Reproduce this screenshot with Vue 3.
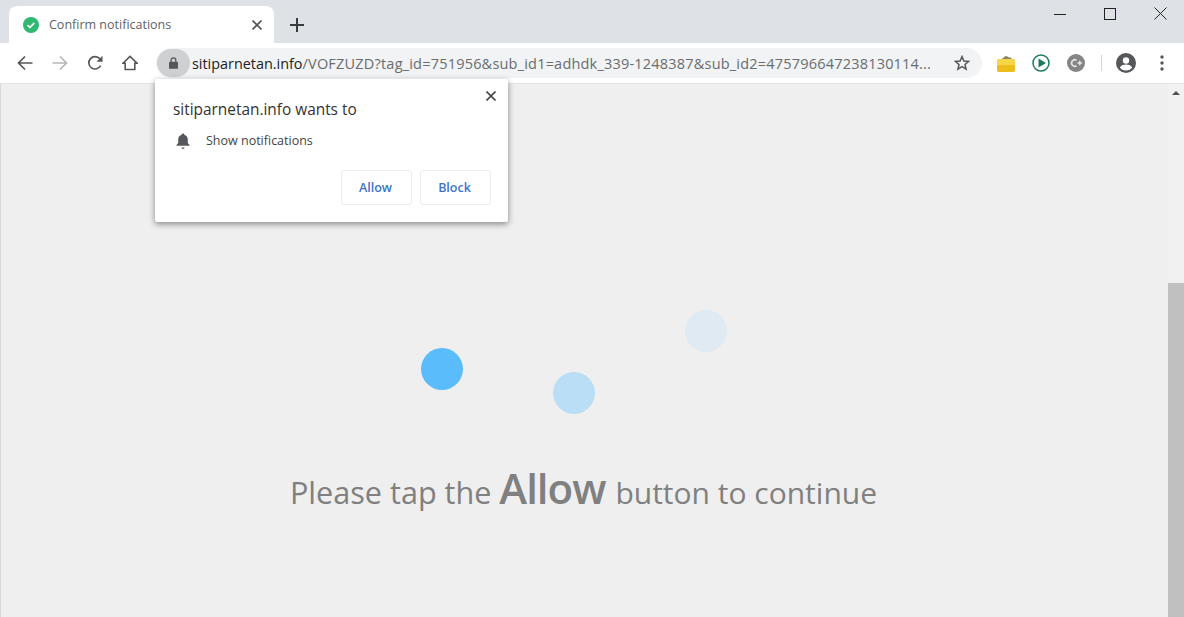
<template>
  <div class="browser">
    <div class="tabstrip">
      <div class="tab">
        <svg class="favicon" width="16" height="16" viewBox="0 0 16 16">
          <circle cx="8" cy="8" r="8" fill="#2eb872" />
          <path d="M4.6 8.2l2.3 2.3 4.4-4.6" fill="none" stroke="#fff" stroke-width="1.7" />
        </svg>
        <span class="tab-title">Confirm notifications</span>
        <svg class="tab-close" width="10" height="10" viewBox="0 0 10 10">
          <path d="M.5.5l9 9M9.500.5l-9 9" stroke="#555" stroke-width="1.6" />
        </svg>
      </div>
      <svg class="new-tab" width="14" height="14" viewBox="0 0 14 14">
        <path d="M7 0v14M0 7h14" stroke="#3a3b3e" stroke-width="2" />
      </svg>
      <div class="window-controls">
        <svg width="12" height="12" viewBox="0 0 12 12"><path d="M0 6.500h12" stroke="#222" stroke-width="1" /></svg>
        <svg width="12" height="12" viewBox="0 0 12 12"><rect x=".5" y=".5" width="11" height="11" fill="none" stroke="#222" /></svg>
        <svg width="13" height="13" viewBox="0 0 13 13"><path d="M.5.5l12 12M12.500.5l-12 12" stroke="#222" stroke-width="1" /></svg>
      </div>
    </div>

    <div class="toolbar">
      <div class="nav">
        <svg width="16" height="16" viewBox="0 0 16 16"><path d="M15.500 8H1.500M8 1.500L1.500 8 8 14.500" fill="none" stroke="#55575a" stroke-width="1.700" /></svg>
        <svg width="16" height="16" viewBox="0 0 16 16"><path d="M.5 8h14M8 1.500L14.500 8 8 14.500" fill="none" stroke="#b4b6b9" stroke-width="1.700" /></svg>
        <svg width="16" height="16" viewBox="0 0 16 16"><path d="M13.600 10.500A6.200 6.200 0 1 1 12.800 3.800L14.800 5.800" fill="none" stroke="#55575a" stroke-width="1.700" /><path d="M15.500 .8v6h-6z" fill="#55575a" /></svg>
        <svg width="16" height="16" viewBox="0 0 16 16"><path d="M1 8.200L8 1.400l7 6.800h-2.200v6.300H3.200V8.200z" fill="none" stroke="#55575a" stroke-width="1.600" /></svg>
      </div>
      <div class="omnibox">
        <div class="lock-pill">
          <svg width="9" height="12" viewBox="0 0 10 13">
            <rect x="0" y="5" width="10" height="8" rx="1" fill="#55575a" />
            <path d="M2.400 5.500V3.500a2.600 2.600 0 0 1 5.200 0v2" fill="none" stroke="#55575a" stroke-width="1.400" />
          </svg>
        </div>
        <span class="url"><span class="host">sitiparnetan.info</span>/VOFZUZD?tag_id=751956&amp;sub_id1=adhdk_339-1248387&amp;sub_id2=475796647238130114...</span>
        <svg class="star" width="16" height="16" viewBox="0 0 16 16">
          <path d="M8 1.600l1.900 4.400 4.700.4-3.600 3.100 1.100 4.700L8 11.700l-4.100 2.500L5 9.500 1.400 6.400l4.700-.4z" fill="none" stroke="#55575a" stroke-width="1.500" />
        </svg>
      </div>
      <div class="extensions">
        <svg width="18" height="17" viewBox="0 0 18 17">
          <path d="M4 4.500L9 .8l2.500 1.400 3 .6v2H4z" fill="#8c8560" />
          <path d="M0 5.500Q0 4 1.500 4h15Q18 4 18 5.500V15q0 2-2 2H2q-2 0-2-2z" fill="#f6d548" />
          <path d="M0 10h18v5q0 2-2 2H2q-2 0-2-2z" fill="#edbd1e" />
        </svg>
        <svg width="18" height="18" viewBox="0 0 18 18">
          <circle cx="9" cy="9" r="8" fill="#fff" stroke="#1f7a5c" stroke-width="1.500" />
          <path d="M6.500 4.500L14 9l-7.500 4.500z" fill="#1f7a5c" />
        </svg>
        <svg width="18" height="18" viewBox="0 0 18 18">
          <circle cx="9" cy="9" r="9" fill="#858585" />
          <path d="M9.500 6.300a3.200 3.200 0 1 0 0 5.400" fill="none" stroke="#e6e6e6" stroke-width="1.600" />
          <path d="M10.500 9h4.500M12.750 6.750v4.500" stroke="#e6e6e6" stroke-width="1.400" />
        </svg>
        <span class="sep"></span>
        <svg width="20" height="20" viewBox="0 0 20 20">
          <circle cx="10" cy="10" r="10" fill="#55575a" />
          <circle cx="10" cy="7.500" r="3.200" fill="#fff" />
          <path d="M3.800 14.500c1.500-2.400 4-3 6.200-3s4.700.6 6.200 3c-1.400 1.900-3.600 3-6.200 3s-4.800-1.100-6.200-3z" fill="#fff" />
        </svg>
        <svg class="menu" width="4" height="16" viewBox="0 0 4 16">
          <circle cx="2" cy="2" r="1.700" fill="#55575a" />
          <circle cx="2" cy="8" r="1.700" fill="#55575a" />
          <circle cx="2" cy="14" r="1.700" fill="#55575a" />
        </svg>
      </div>
    </div>

    <div class="page">
      <div class="content">
        <h1 class="headline">Please tap the <b>Allow</b> <span class="tail">button to continue</span></h1>
        <span v-for="dot in dots" :key="dot.color" class="dot" :style="{ left: dot.x + 'px', top: dot.y + 'px', background: dot.color }"></span>
      </div>
      <div class="scrollbar">
        <div class="arrow"></div>
        <div class="thumb"></div>
      </div>

      <div class="popup">
        <svg class="popup-close" width="10" height="10" viewBox="0 0 10 10">
          <path d="M.5.5l9 9M9.500.5l-9 9" stroke="#4a4a4a" stroke-width="1.700" />
        </svg>
        <div class="popup-title">sitiparnetan.info wants to</div>
        <div class="popup-row">
          <svg width="14" height="16" viewBox="0 0 14 16">
            <path d="M7 0.500c.8 0 1.300.5 1.300 1.200 2.300.6 3.500 2.500 3.500 4.800v3.500l1.700 2v.8H.5v-.8l1.700-2V6.500c0-2.300 1.200-4.200 3.500-4.800C5.700 1 6.200.5 7 .5zM5.400 14.500h3.200a1.600 1.500 0 0 1-3.200 0z" fill="#55575a" />
          </svg>
          <span>Show notifications</span>
        </div>
        <div class="popup-actions">
          <button class="btn">Allow</button>
          <button class="btn">Block</button>
        </div>
      </div>
    </div>
  </div>
</template>

<script setup>
const dots = [
  { x: 421, y: 264, color: '#5bbcfc' },
  { x: 553, y: 288, color: '#b9def5' },
  { x: 685, y: 226, color: '#dfeaf2' },
];
</script>

<style>
html, body {
  margin: 0;
  overflow: hidden;
}
</style>

<style scoped>
.browser {
  width: 1184px;
  height: 617px;
  display: flex;
  flex-direction: column;
  font-family: "Open Sans", sans-serif;
  overflow: hidden;
}

.tabstrip {
  height: 43px;
  background: #dee1e6;
  display: flex;
  align-items: flex-end;
  padding-left: 9px;
  flex: none;
}

.tab {
  width: 265px;
  height: 37px;
  box-sizing: border-box;
  background: #fff;
  border-radius: 8px 8px 0 0;
  display: flex;
  align-items: center;
  padding: 0 12px 0 14px;
}

.tab-title {
  margin-left: 10px;
  font-size: 12.500px;
  color: #5f6368;
  flex: 1;
}

.new-tab {
  margin: 0 0 11px 16px;
}

.window-controls {
  margin-left: auto;
  align-self: flex-start;
  display: flex;
  align-items: center;
  gap: 38px;
  padding: 7px 17px 0 0;
}

.toolbar {
  height: 41px;
  background: #fff;
  border-bottom: 1px solid #e4e4e4;
  box-sizing: border-box;
  display: flex;
  align-items: center;
  flex: none;
  padding-left: 17px;
}

.nav {
  display: flex;
  align-items: center;
  gap: 19px;
  margin-right: 18px;
}

.omnibox {
  width: 826px;
  height: 30px;
  background: #f1f3f4;
  border-radius: 15px;
  display: flex;
  align-items: center;
  box-sizing: border-box;
  padding-right: 12px;
}

.lock-pill {
  width: 33px;
  height: 28px;
  border-radius: 14px;
  background: #cfd0d1;
  display: flex;
  align-items: center;
  justify-content: center;
  flex: none;
  margin: 0 2px 0 1px;
}

.url {
  font-size: 14.500px;
  letter-spacing: .2px;
  color: #6a6d70;
  white-space: nowrap;
  overflow: hidden;
  flex: 1;
}

.host {
  color: #202124;
  letter-spacing: 0;
  font-size: 14.400px;
}

.star {
  flex: none;
  margin-left: 4px;
}

.extensions {
  display: flex;
  align-items: center;
  margin-left: 15px;
}

.extensions svg:nth-child(2) {
  margin-left: 17px;
}

.extensions svg:nth-child(3) {
  margin-left: 17px;
}

.sep {
  width: 1px;
  height: 16px;
  background: #d5d6d8;
  margin: 0 14px 0 16px;
}

.menu {
  margin-left: 24px;
}

.page {
  flex: 1;
  display: flex;
  position: relative;
  background: #efefef;
  min-height: 0;
}

.content {
  flex: 1;
  position: relative;
  border-left: 1px solid #d8d8d8;
  padding-top: 379px;
}

.headline {
  margin: 0;
  text-align: center;
  font-family: "Open Sans", sans-serif;
  font-size: 30.600px;
  font-weight: 400;
  line-height: 50px;
  color: #808080;
  white-space: nowrap;
  padding-right: 2px;
}

.headline b {
  font-size: 42px;
  font-weight: 600;
  letter-spacing: -1px;
  margin-right: 2px;
}

.tail {
  font-size: 30px;
}

.dot {
  position: absolute;
  width: 42px;
  height: 42px;
  border-radius: 50%;
  margin-left: -1px;
  filter: blur(.5px);
}

.scrollbar {
  width: 16px;
  flex: none;
  background: #f1f1f1;
  display: flex;
  flex-direction: column;
}

.arrow {
  width: 0;
  height: 0;
  margin: 7px 0 0 4px;
  border-left: 4px solid transparent;
  border-right: 4px solid transparent;
  border-bottom: 4px solid #505050;
}

.thumb {
  margin-top: 188px;
  flex: 1;
  background: #c0c0c0;
}

.popup {
  position: absolute;
  left: 155px;
  top: -5px;
  width: 353px;
  height: 143px;
  box-sizing: border-box;
  background: #fff;
  border-radius: 2px;
  box-shadow: 0 2px 6px rgba(0, 0, 0, .45);
  padding: 21px 18px 0;
}

.popup-close {
  position: absolute;
  top: 12px;
  right: 12px;
}

.popup-title {
  font-size: 15.400px;
  line-height: 20px;
  color: #333;
}

.popup-row {
  margin-top: 12px;
  display: flex;
  align-items: center;
  font-size: 12.500px;
  color: #444;
  padding-left: 3px;
}

.popup-row span {
  margin-left: 16px;
}

.popup-actions {
  display: flex;
  justify-content: flex-end;
  gap: 8px;
  position: absolute;
  right: 17px;
  bottom: 17px;
}

.btn {
  width: 71px;
  height: 35px;
  background: #fff;
  border: 1px solid #ebecee;
  border-radius: 3px;
  font-family: "Open Sans", sans-serif;
  font-size: 12.500px;
  font-weight: 600;
  color: #3d74c5;
  padding: 0 2px 0 0;
}
</style>
